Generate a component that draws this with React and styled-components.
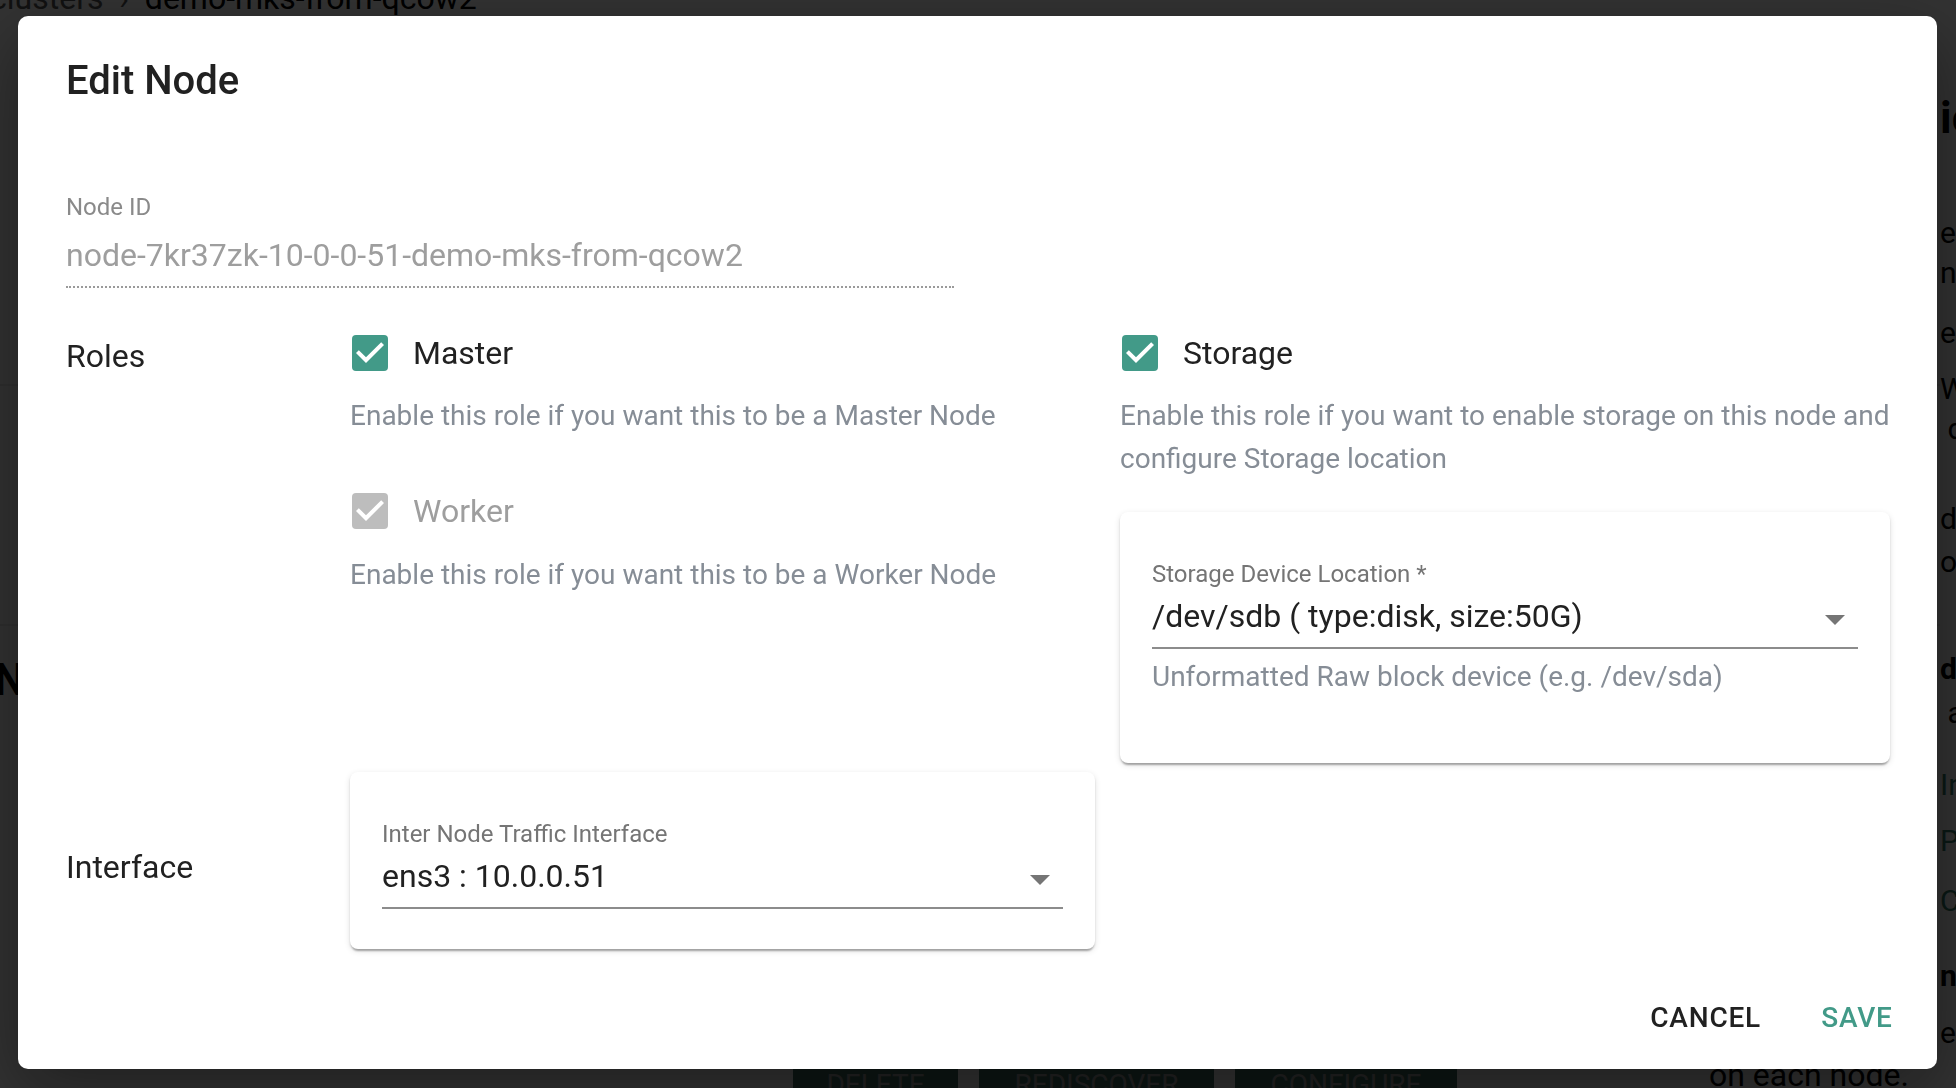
import React from 'react';
import styled, { createGlobalStyle } from 'styled-components';

const GlobalStyle = createGlobalStyle`
  html, body {
    margin: 0;
    padding: 0;
    width: 1956px;
    height: 1088px;
    overflow: hidden;
    font-family: Roboto, "Liberation Sans", Arial, sans-serif;
  }
  * { box-sizing: border-box; }
`;

const TEAL = '#429a88';

/* ---------- page behind the modal ---------- */

const Page = styled.div`
  width: 1956px;
  height: 1088px;
  background: #fafafa;
  display: grid;
  grid-template-columns: 1940px 1fr;
  overflow: hidden;
  color: #000;
`;

const LeftPane = styled.div`
  display: flex;
  flex-direction: column;
`;

const Crumbs = styled.div`
  font-size: 32px;
  line-height: 40px;
  margin: -22px 0 0 -10px;
  color: #555;
  span { color: #000; }
`;

const PaneRule = styled.div`
  height: 2px;
  background: #e4e4e4;
  margin-top: ${p => p.top}px;
`;

const PaneHeading = styled.div`
  font-size: 44px;
  font-weight: 700;
  margin: 28px 0 0 -6px;
`;

const PaneActions = styled.div`
  display: flex;
  align-items: flex-start;
  margin: 360px 0 0 793px;
  gap: 21px;
`;

const PaneButton = styled.div`
  width: ${p => p.w}px;
  height: 40px;
  background: #3f6f62;
  color: #aaa;
  font-size: 28px;
  text-align: center;
  padding-top: 2px;
`;

const PaneNote = styled.div`
  margin: -10px 0 0 231px;
  font-size: 32px;
  white-space: nowrap;
`;

const RightPane = styled.div`
  display: flex;
  flex-direction: column;
  white-space: nowrap;
  padding-top: 98px;
`;

const PaneLine = styled.div`
  font-size: ${p => (p.big ? 44 : 30)}px;
  font-weight: ${p => (p.bold ? 700 : 400)};
  color: ${p => (p.teal ? '#2f7a66' : '#000')};
  line-height: 40px;
  margin-top: ${p => p.gap || 0}px;
`;

const Backdrop = styled.div`
  position: fixed;
  inset: 0;
  background: rgba(0, 0, 0, 0.8);
`;

/* ---------- dialog ---------- */

const Dialog = styled.div`
  position: fixed;
  left: 18px;
  top: 16px;
  width: 1919px;
  height: 1053px;
  background: #fff;
  border-radius: 10px;
  box-shadow: 0 22px 70px rgba(0, 0, 0, 0.4);
  display: flex;
  flex-direction: column;
`;

const Title = styled.h2`
  margin: 0;
  padding: 33px 48px 0;
  font-size: 40px;
  line-height: 64px;
  font-weight: 500;
  color: #212121;
`;

const Content = styled.div`
  padding: 0 48px;
`;

const NodeField = styled.div`
  width: 888px;
  margin-top: 79px;
`;

const FieldLabel = styled.div`
  font-size: 24px;
  line-height: 30px;
  color: ${p => p.color || '#8a8a8a'};
`;

const DisabledValue = styled.div`
  margin-top: 10px;
  font-size: 32px;
  line-height: 46px;
  color: #9e9e9e;
  padding-bottom: 8px;
  border-bottom: 2px dotted #9a9a9a;
`;

const RolesGrid = styled.div`
  display: grid;
  grid-template-columns: 259px 745px 770px;
  column-gap: 25px;
  row-gap: 9px;
  margin-top: 41px;
`;

const SectionLabel = styled.div`
  font-size: 32px;
  line-height: 48px;
  color: #212121;
  align-self: ${p => (p.center ? 'center' : 'start')};
  margin-top: ${p => (p.center ? '12px' : '3px')};
`;

const Column = styled.div`
  display: flex;
  flex-direction: column;
`;

const CheckRow = styled.label`
  display: flex;
  align-items: center;
  gap: 25px;
  height: 48px;
  margin-top: ${p => p.gap || 0}px;
  font-size: 32px;
  color: ${p => (p.disabled ? '#9e9e9e' : '#212121')};
`;

const Box = styled.span`
  width: 36px;
  height: 36px;
  border-radius: 4px;
  background: ${p => (p.disabled ? '#bdbdbd' : TEAL)};
  display: flex;
  align-items: center;
  justify-content: center;
  margin-left: 2px;
`;

const Description = styled.p`
  margin: ${p => p.gap || 17}px 0 0;
  font-size: 28px;
  line-height: 43px;
  color: #868d96;
`;

const Card = styled.div`
  margin-top: ${p => p.gap || 0}px;
  padding: 47px 32px ${p => p.bottom}px;
  background: #fff;
  border-radius: 8px;
  box-shadow: 0 4px 2px -2px rgba(0, 0, 0, 0.2), 0 2px 2px 0 rgba(0, 0, 0, 0.14),
    0 2px 6px 0 rgba(0, 0, 0, 0.12);
`;

const SelectBox = styled.div`
  margin-top: 4px;
  display: flex;
  align-items: center;
  justify-content: space-between;
  padding-bottom: 8px;
  border-bottom: 2px solid #8c8c8c;
`;

const SelectValue = styled.span`
  font-size: 32px;
  line-height: 46px;
  color: #212121;
`;

const Arrow = styled.svg`
  width: 20px;
  height: 10px;
  margin: 8px 13px 0 0;
  fill: #757575;
`;

const Helper = styled.div`
  margin-top: 6px;
  font-size: 28px;
  line-height: 43px;
  color: #868d96;
`;

const Actions = styled.div`
  margin-top: auto;
  display: flex;
  justify-content: flex-end;
  gap: 16px;
  padding: 16px;
`;

const Button = styled.button`
  height: 72px;
  min-width: 128px;
  padding: 12px 16px;
  border: none;
  background: none;
  font-family: inherit;
  font-size: 28px;
  font-weight: 500;
  letter-spacing: 0.8px;
  text-transform: uppercase;
  color: ${p => (p.primary ? TEAL : '#212121')};
  cursor: pointer;
`;

function Check({ disabled }) {
  return (
    <Box disabled={disabled}>
      <svg width="36" height="36" viewBox="3 3 18 18">
        <path fill="#fff" d="M10 17l-5-5 1.41-1.41L10 14.17l7.59-7.59L19 8l-9 9z" />
      </svg>
    </Box>
  );
}

function SelectField({ label, value }) {
  return (
    <>
      <FieldLabel color="#757575">{label}</FieldLabel>
      <SelectBox>
        <SelectValue>{value}</SelectValue>
        <Arrow viewBox="0 0 20 10">
          <path d="M0 0l10 10 10-10z" />
        </Arrow>
      </SelectBox>
    </>
  );
}

export default function App() {
  return (
    <>
      <GlobalStyle />
      <Page>
        <LeftPane>
          <Crumbs>clusters &nbsp;›&nbsp; <span>demo-mks-from-qcow2</span></Crumbs>
          <PaneRule top={366} />
          <PaneRule top={238} />
          <PaneHeading>Nodes</PaneHeading>
          <PaneActions>
            <PaneButton w={165}>DELETE</PaneButton>
            <PaneButton w={235}>REDISCOVER</PaneButton>
            <PaneButton w={222}>CONFIGURE</PaneButton>
            <PaneNote>on each node.</PaneNote>
          </PaneActions>
        </LeftPane>
        <RightPane>
          <PaneLine big bold>ic</PaneLine>
          <PaneLine gap={75}>er</PaneLine>
          <PaneLine>n</PaneLine>
          <PaneLine gap={20}>ed</PaneLine>
          <PaneLine gap={16}>W</PaneLine>
          <PaneLine gap={0}>&nbsp;d</PaneLine>
          <PaneLine gap={50}>d</PaneLine>
          <PaneLine gap={3}>oc</PaneLine>
          <PaneLine gap={67} bold>d</PaneLine>
          <PaneLine gap={4}>&nbsp;a</PaneLine>
          <PaneLine gap={32} teal>In</PaneLine>
          <PaneLine gap={16} teal>P</PaneLine>
          <PaneLine gap={20} teal>C</PaneLine>
          <PaneLine gap={35} bold>ne</PaneLine>
          <PaneLine gap={17}>er</PaneLine>
        </RightPane>
      </Page>
      <Backdrop />
      <Dialog>
        <Title>Edit Node</Title>
        <Content>
          <NodeField>
            <FieldLabel>Node ID</FieldLabel>
            <DisabledValue>node-7kr37zk-10-0-0-51-demo-mks-from-qcow2</DisabledValue>
          </NodeField>
          <RolesGrid>
            <SectionLabel>Roles</SectionLabel>
            <Column>
              <CheckRow>
                <Check />
                Master
              </CheckRow>
              <Description>Enable this role if you want this to be a Master Node</Description>
              <CheckRow gap={50} disabled>
                <Check disabled />
                Worker
              </CheckRow>
              <Description gap={18}>Enable this role if you want this to be a Worker Node</Description>
            </Column>
            <Column>
              <CheckRow>
                <Check />
                Storage
              </CheckRow>
              <Description>
                Enable this role if you want to enable storage on this node and configure Storage
                location
              </Description>
              <Card gap={32} bottom={65}>
                <SelectField label="Storage Device Location *" value="/dev/sdb ( type:disk, size:50G)" />
                <Helper>Unformatted Raw block device (e.g. /dev/sda)</Helper>
              </Card>
            </Column>
            <SectionLabel center>Interface</SectionLabel>
            <Card bottom={40}>
              <SelectField label="Inter Node Traffic Interface" value="ens3 : 10.0.0.51" />
            </Card>
          </RolesGrid>
        </Content>
        <Actions>
          <Button>Cancel</Button>
          <Button primary>Save</Button>
        </Actions>
      </Dialog>
    </>
  );
}
